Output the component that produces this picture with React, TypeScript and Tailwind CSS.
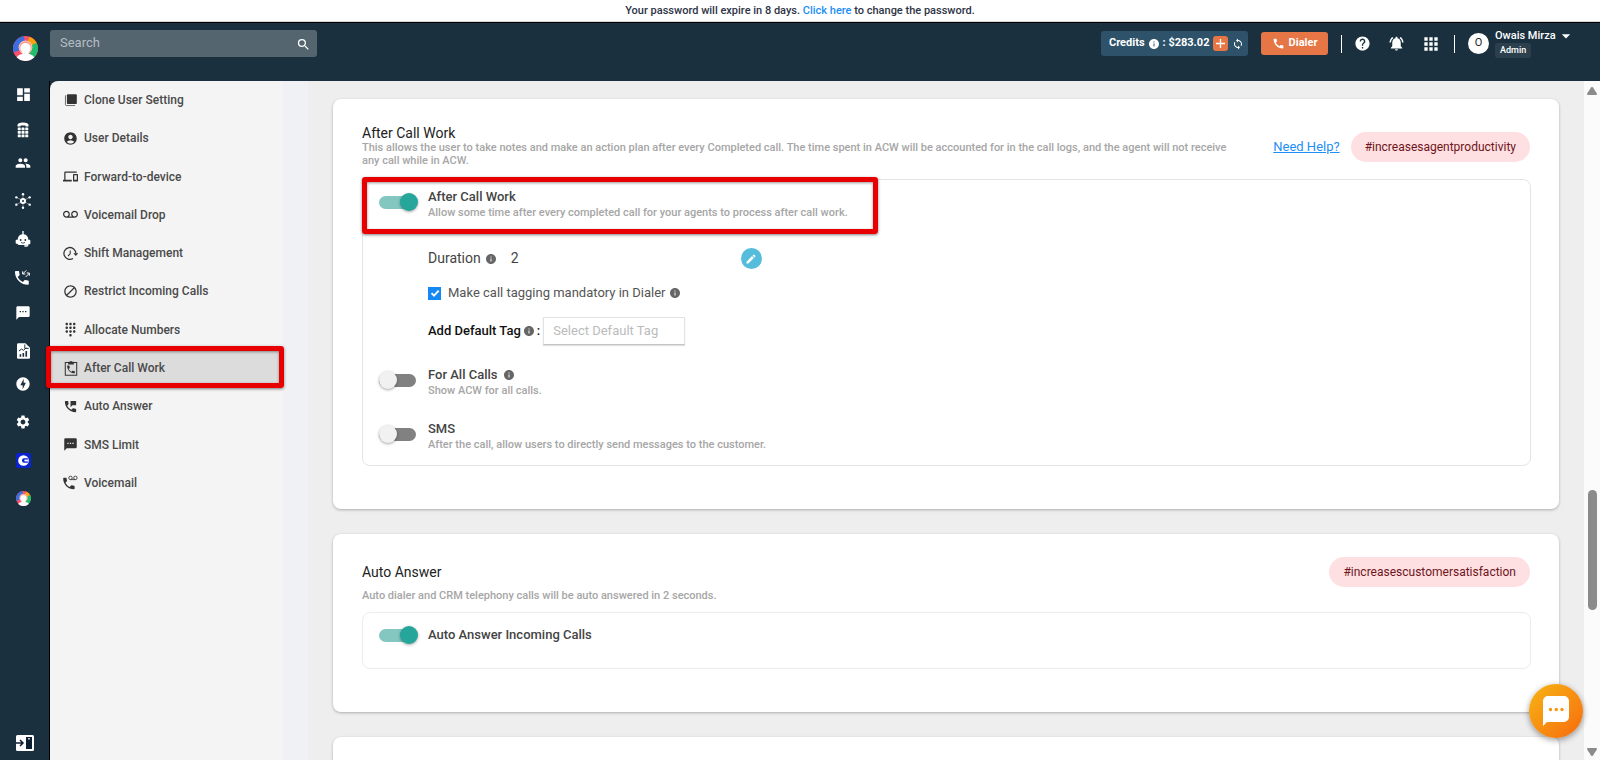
import type { ReactNode } from "react";
import { clsx } from "clsx";
import {
  MdAccountCircle,
  MdApps,
  MdArrowDropDown,
  MdBlock,
  MdCall,
  MdDashboard,
  MdDevices,
  MdDialpad,
  MdEdit,
  MdHelp,
  MdInfo,
  MdLoop,
  MdNotificationsActive,
  MdOfflineBolt,
  MdPeople,
  MdPermPhoneMsg,
  MdSearch,
  MdSettings,
  MdTextsms,
  MdVoicemail,
} from "react-icons/md";

const PHONE =
  "M6.62 10.79c1.44 2.83 3.76 5.14 6.59 6.59l2.2-2.2c.27-.27.67-.36 1.02-.24 1.12.37 2.33.57 3.57.57.55 0 1 .45 1 1V20c0 .55-.45 1-1 1-9.39 0-17-7.61-17-17 0-.55.45-1 1-1h3.5c.55 0 1 .45 1 1 0 1.25.2 2.45.57 3.57.11.35.03.74-.25 1.02l-2.2 2.2z";

type IconProps = { className?: string };

function BrandLogo({ className }: IconProps) {
  return (
    <svg viewBox="0 0 24 24" className={className} aria-hidden="true">
      <circle cx="12" cy="12" r="12" fill="#fb5068" />
      <path d="M12 12 .6 15.600A12 12 0 0 1 10.500 .1Z" fill="#3b6fe0" />
      <path d="M12 12 15.900 .7A12 12 0 0 1 23 7.400Z" fill="#fba20c" />
      <path d="M12 12 22.600 6.400A12 12 0 0 1 19.400 21.400Z" fill="#1fbf6b" />
      <circle cx="12" cy="11" r="6.600" fill="#ffc9bf" />
      <circle cx="12" cy="11" r="5.700" fill="#ff8f7a" />
      <circle cx="12" cy="11.500" r="5" fill="#fff" />
      <path d="M3.600 20.600C4.500 18.500 7.500 17 12 17s7.500 1.500 8.400 3.600A12 12 0 0 1 3.600 20.600Z" fill="#fff" />
      <path d="M9 14h6v4H9z" fill="#fff" />
    </svg>
  );
}

function DeskPhoneIcon({ className }: IconProps) {
  return (
    <svg viewBox="0 0 24 32" className={className} fill="currentColor" aria-hidden="true">
      <path d="M1 9V6c0-3 4-5 11-5s11 2 11 5v3h-6V7H7v2z" />
      {[11, 18, 25].map((y) =>
        [1.5, 9, 16.5].map((x) => <rect key={`${x}-${y}`} x={x} y={y} width="6" height="5.500" rx="1" />),
      )}
    </svg>
  );
}

function HubIcon({ className }: IconProps) {
  const spokes: [number, number][] = [
    [12, 1.8],
    [2, 6.5],
    [22, 6.5],
    [2, 17.5],
    [22, 17.5],
    [12, 22.2],
  ];
  return (
    <svg viewBox="0 0 24 24" className={className} fill="currentColor" aria-hidden="true">
      {spokes.map(([x, y]) => (
        <g key={`${x}-${y}`}>
          <path d={`M12 12 ${x} ${y}`} stroke="currentColor" strokeWidth="1" opacity=".6" />
          <circle cx={x} cy={y} r="1.800" />
        </g>
      ))}
      <circle cx="12" cy="12" r="4.600" />
      <circle cx="12" cy="12" r="1.500" fill="#1b303f" />
    </svg>
  );
}

function BotIcon({ className }: IconProps) {
  return (
    <svg viewBox="0 0 24 24" className={className} fill="currentColor" aria-hidden="true">
      <path d="M11 0h2v5c4.500.5 7 4 7 8h1.500c.8 0 1.500.6 1.500 1.500v4c0 .8-.7 1.500-1.500 1.500H20v1c0 1.500-1 2.500-2.500 2.500H14v-2h3.500l.5-.5H8c-2.500 0-4-1-4.500-2h-1C1.700 19 1 18.300 1 17.500v-3C1 13.600 1.700 13 2.500 13H4c0-4 2.500-7.500 7-8z" />
      <circle cx="8.500" cy="13.500" r="1.400" fill="#1b303f" />
      <circle cx="15.500" cy="13.500" r="1.400" fill="#1b303f" />
      <path d="M9 17c2 1.500 4 1.500 6 0" stroke="#1b303f" strokeWidth="1.200" fill="none" />
    </svg>
  );
}

function CallSwapIcon({ className }: IconProps) {
  return (
    <svg viewBox="0 0 24 24" className={className} fill="currentColor" aria-hidden="true">
      <path d={PHONE} transform="translate(-3.500 -.5) scale(1.150)" />
      <path d="M17 2l-5.500 5.500M11.500 3.500v4h4M16 12 21.500 6.500M17.500 6h4v4" fill="none" stroke="currentColor" strokeWidth="1.500" />
    </svg>
  );
}

function ReportIcon({ className }: IconProps) {
  return (
    <svg viewBox="0 0 20 24" className={className} fill="currentColor" aria-hidden="true">
      <path d="M2 0h11l7 7v15a2 2 0 0 1-2 2H2a2 2 0 0 1-2-2V2C0 .9.9 0 2 0z" />
      <path d="M12 2v6h6M3 12l4-3 3 2 4-4" stroke="#1b303f" strokeWidth="1.500" fill="none" />
      <path d="M4 17h2.500v4H4zM8.500 15H11v6H8.500zM13 12h2.500v9H13z" fill="#1b303f" />
    </svg>
  );
}

function BlueAppIcon({ className }: IconProps) {
  return (
    <svg viewBox="0 0 24 24" className={className} aria-hidden="true">
      <rect width="24" height="24" rx="3" fill="#0a22d0" />
      <circle cx="12" cy="12" r="8.500" fill="#fff" />
      <path d="M19 8.500h-6a3.500 3.500 0 1 0 0 7h6z" fill="#0a22d0" />
      <path d="M19 10.500h-5.500v3H19z" fill="#fff" />
    </svg>
  );
}

function PanelToggleIcon({ className }: IconProps) {
  return (
    <svg viewBox="0 0 18 16" className={className} aria-hidden="true">
      <rect width="18" height="16" rx="1.500" fill="#fff" />
      <path d="M0 8h6M4 5l3 3-3 3" fill="none" stroke="#0e1f33" strokeWidth="1.500" />
      <rect x="10" y="2" width="6" height="12" fill="#0e1f33" />
      <rect x="12.200" y="3" width="1.500" height="1.500" fill="#fff" />
    </svg>
  );
}

function CloneIcon({ className }: IconProps) {
  return (
    <svg viewBox="0 0 24 24" className={className} fill="currentColor" aria-hidden="true">
      <path d="M7 2h13c1 0 2 .9 2 2v13c0 1.100-.9 2-2 2H7c-1.100 0-2-.9-2-2V4c0-1.100.9-2 2-2z" />
      <path d="M2.500 4V20c0 .8.700 1.500 1.500 1.500h15" fill="none" stroke="currentColor" strokeWidth="1.500" opacity=".8" />
    </svg>
  );
}

function ShiftIcon({ className }: IconProps) {
  return (
    <svg viewBox="0 0 24 24" className={className} fill="none" stroke="currentColor" strokeWidth="2" aria-hidden="true">
      <path d="M20.500 12A9.500 9.500 0 1 0 16 20" />
      <path d="M11.500 7v5.500L8 16" strokeWidth="1.700" />
      <path d="M16.500 11.500h8L20.500 16z" fill="currentColor" stroke="none" />
    </svg>
  );
}

function ClipboardCallIcon({ className }: IconProps) {
  return (
    <svg viewBox="0 0 24 28" className={className} fill="currentColor" aria-hidden="true">
      <path d="M2 4.500h20v22H2z" fill="none" stroke="currentColor" strokeWidth="1.800" />
      <path d="M7 3h3a2.200 2.200 0 0 1 4 0h3v5H7z" />
      <path d={PHONE} transform="translate(3 7.500) scale(.75)" />
    </svg>
  );
}

function VoicemailCallIcon({ className }: IconProps) {
  return (
    <svg viewBox="0 0 26 24" className={className} fill="currentColor" aria-hidden="true">
      <path d={PHONE} transform="translate(-3 .5) scale(1.100)" />
      <g fill="none" stroke="currentColor" strokeWidth="1.500">
        <circle cx="13" cy="4" r="3" />
        <circle cx="21.500" cy="4" r="3" />
        <path d="M13 7h8.500" />
      </g>
    </svg>
  );
}

const railItems: { name: string; icon: ReactNode; gap: string }[] = [
  { name: "Dashboard", icon: <MdDashboard className="size-[17px]" />, gap: "mb-5" },
  { name: "Numbers", icon: <DeskPhoneIcon className="h-4 w-3" />, gap: "mb-[17px]" },
  { name: "Users", icon: <MdPeople className="size-4" />, gap: "mb-[22px]" },
  { name: "Integrations", icon: <HubIcon className="size-4" />, gap: "mb-[22px]" },
  { name: "Assistant", icon: <BotIcon className="size-4" />, gap: "mb-[22px]" },
  { name: "Call logs", icon: <CallSwapIcon className="size-4" />, gap: "mb-5" },
  { name: "Messages", icon: <MdTextsms className="size-4" />, gap: "mb-[22px]" },
  { name: "Reports", icon: <ReportIcon className="h-4 w-[13px]" />, gap: "mb-[17px]" },
  { name: "Automation", icon: <MdOfflineBolt className="size-4" />, gap: "mb-[22px]" },
  { name: "Settings", icon: <MdSettings className="size-4" />, gap: "mb-[22px]" },
  { name: "Partner app", icon: <BlueAppIcon className="size-[15px]" />, gap: "mb-[22px]" },
  { name: "Home", icon: <BrandLogo className="size-[15px]" />, gap: "mb-auto" },
];

const menuItems: { label: string; icon: ReactNode; active?: boolean }[] = [
  { label: "Clone User Setting", icon: <CloneIcon className="size-[14px]" /> },
  { label: "User Details", icon: <MdAccountCircle className="size-[15px]" /> },
  { label: "Forward-to-device", icon: <MdDevices className="size-[15px]" /> },
  { label: "Voicemail Drop", icon: <MdVoicemail className="size-[15px]" /> },
  { label: "Shift Management", icon: <ShiftIcon className="size-[15px]" /> },
  { label: "Restrict Incoming Calls", icon: <MdBlock className="size-[15px]" /> },
  { label: "Allocate Numbers", icon: <MdDialpad className="size-[15px]" /> },
  { label: "After Call Work", icon: <ClipboardCallIcon className="h-4 w-[14px]" />, active: true },
  { label: "Auto Answer", icon: <MdPermPhoneMsg className="size-[15px]" /> },
  { label: "SMS Limit", icon: <MdTextsms className="size-[15px]" /> },
  { label: "Voicemail", icon: <VoicemailCallIcon className="h-[15px] w-4" /> },
];

function Toggle({ id, on = false }: { id: string; on?: boolean }) {
  return (
    <span className="relative flex h-[18px] w-[39px] shrink-0 items-center">
      <input
        id={id}
        type="checkbox"
        role="switch"
        defaultChecked={on}
        className="peer absolute inset-0 z-10 m-0 cursor-pointer opacity-0"
      />
      <span className="h-[13px] w-[37px] rounded-full bg-[#818181] peer-checked:bg-[#84c7c1]" />
      <span className="absolute left-0 size-[18px] rounded-full bg-[#f1f1f1] shadow-[0_1px_3px_rgba(0,0,0,0.35)] peer-checked:left-[21px] peer-checked:bg-[#26a69a]" />
    </span>
  );
}

function SettingRow({
  id,
  label,
  hint,
  on,
  info,
}: {
  id: string;
  label: string;
  hint: string;
  on?: boolean;
  info?: boolean;
}) {
  return (
    <div className="flex items-start gap-[10px]">
      <span className="pt-1">
        <Toggle id={id} on={on} />
      </span>
      <div>
        <label htmlFor={id} className="flex items-center text-[13px] leading-4 font-medium text-[#444]">
          {label}
          {info && <Info className="ml-[5px]" />}
        </label>
        <p className="text-[11px] leading-4 font-medium text-[#a6a6a6]">{hint}</p>
      </div>
    </div>
  );
}

function Info({ className }: IconProps) {
  return <MdInfo className={clsx("size-3 shrink-0 text-[#666]", className)} aria-hidden="true" />;
}

function Highlight({ className }: IconProps) {
  return (
    <span
      aria-hidden="true"
      className={clsx(
        "pointer-events-none absolute z-10 rounded-[3px] border-5 border-[#e80000] shadow-[0_1px_3px_rgba(0,0,0,0.5),inset_0_1px_3px_rgba(0,0,0,0.4)]",
        className,
      )}
    />
  );
}

function Tag({ children }: { children: ReactNode }) {
  return (
    <span className="flex h-[30px] shrink-0 items-center rounded-full bg-[#ffe0e2] px-[14px] text-[12px] text-[#6e1420]">
      {children}
    </span>
  );
}

function Card({ children, className }: { children?: ReactNode; className?: string }) {
  return (
    <section
      className={clsx(
        "shrink-0 rounded-lg bg-white pr-7 pl-[29px] shadow-[0_1px_3px_rgba(0,0,0,0.28)]",
        className,
      )}
    >
      {children}
    </section>
  );
}

function Header() {
  return (
    <header className="flex h-[59px] shrink-0 items-start border-t border-black bg-[#1b303f] pr-[25px] text-white">
      <a href="#home" aria-label="Home" className="ml-[13px] mt-[13px] mr-3">
        <BrandLogo className="size-[25px]" />
      </a>
      <form className="relative mt-[7px] w-[267px]">
        <input
          type="search"
          aria-label="Search"
          placeholder="Search"
          className="block h-[27px] w-full rounded-[3px] bg-[#54656f] pr-8 pb-[3px] pl-[10px] text-[13px] text-white placeholder:text-[#b4bdc3]"
        />
        <button type="button" aria-label="Run search" className="absolute top-[7px] right-[6px]">
          <MdSearch className="size-[15px]" />
        </button>
      </form>
      <div className="mt-[7px] ml-auto flex h-[27px] items-center">
        <div className="flex h-[25px] w-[147px] items-center gap-[3px] rounded-[3px] bg-[#2d526a] pl-2 text-[11px] font-bold whitespace-nowrap">
          <span>Credits</span>
          <MdInfo className="size-3 shrink-0" />
          <span>: $283.02</span>
          <button
            type="button"
            aria-label="Add credits"
            className="ml-px flex size-[15px] shrink-0 items-center justify-center rounded-[3px] bg-[#e67645]"
          >
            <svg viewBox="0 0 10 10" className="size-[9px]" stroke="#fff" strokeWidth="1.500" aria-hidden="true">
              <path d="M5 0v10M0 5h10" />
            </svg>
          </button>
          <button type="button" aria-label="Refresh credits" className="ml-px">
            <MdLoop className="size-3" />
          </button>
        </div>
        <button
          type="button"
          className="ml-[13px] flex h-[23px] w-[67px] items-center justify-center gap-1 rounded-[3px] bg-[#e67645] text-[11px] font-bold"
        >
          <MdCall className="size-[13px]" />
          Dialer
        </button>
        <span className="ml-[13px] h-[18px] w-px bg-white" />
        <button type="button" aria-label="Help" className="ml-3">
          <MdHelp className="size-[17px]" />
        </button>
        <button type="button" aria-label="Notifications" className="ml-[17px]">
          <MdNotificationsActive className="size-[17px]" />
        </button>
        <button type="button" aria-label="Apps" className="ml-4">
          <MdApps className="size-5" />
        </button>
        <span className="ml-[13px] h-[18px] w-px bg-white" />
        <span className="ml-[13px] flex size-[21px] items-center justify-center rounded-full bg-white text-[11px] text-[#222]">
          O
        </span>
        <div className="ml-[6px] flex w-20 flex-col items-start">
          <button type="button" className="flex h-[14px] items-center text-[11px] font-medium whitespace-nowrap">
            Owais Mirza
            <MdArrowDropDown className="size-5" />
          </button>
          <span className="flex h-[15px] items-center rounded-[3px] bg-[#2b3f4c] px-[5px] text-[9px] font-medium">
            Admin
          </span>
        </div>
      </div>
    </header>
  );
}

function Rail() {
  return (
    <nav
      aria-label="Main"
      className="flex w-[50px] shrink-0 flex-col border-r border-black bg-[#1b303f] pt-[5px] pb-[9px] text-white"
    >
      {railItems.map((item) => (
        <a
          key={item.name}
          href="#section"
          aria-label={item.name}
          className={clsx("flex h-4 w-[46px] shrink-0 items-center justify-center", item.gap)}
        >
          {item.icon}
        </a>
      ))}
      <button type="button" aria-label="Expand menu" className="ml-4 w-[18px] shrink-0">
        <PanelToggleIcon className="block h-4 w-[18px]" />
      </button>
    </nav>
  );
}

function SideMenu() {
  return (
    <nav
      aria-label="User settings"
      className="w-[233px] shrink-0 rounded-tl-lg bg-[#f4f4f4] text-[12px] font-medium text-[#4a4a4a]"
    >
      <ul className="grid h-[421px] grid-rows-11">
        {menuItems.map((item) => (
          <li key={item.label} className="relative flex">
            <a
              href="#setting"
              className={clsx("flex w-full items-center gap-[6px] pl-[13px]", item.active && "bg-[#dcdcdc]")}
            >
              <span className="flex w-[15px] justify-center text-[#333]">{item.icon}</span>
              {item.label}
            </a>
            {item.active && <Highlight className="-top-[3px] -right-px -bottom-px -left-1" />}
          </li>
        ))}
      </ul>
    </nav>
  );
}

function AfterCallWork() {
  return (
    <Card className="pt-[26px] pb-[43px]">
      <div className="flex items-start">
        <div className="flex-1">
          <h2 className="text-[14px] leading-4 text-[#222]">After Call Work</h2>
          <p className="text-[11px] leading-[13px] font-medium text-[#a6a6a6]">
            This allows the user to take notes and make an action plan after every Completed call. The time spent in ACW
            will be accounted for in the call logs, and the agent will not receive
            <br />
            any call while in ACW.
          </p>
        </div>
        <div className="mt-[7px] flex items-center gap-[11px] pr-px">
          <a href="#help" className="text-[13px] text-[#1e8ff5] underline">
            Need Help?
          </a>
          <Tag>#increasesagentproductivity</Tag>
        </div>
      </div>

      <div className="relative mt-3 rounded-lg border border-[#e4e4e4] px-4 pt-[9px] pb-3">
        <Highlight className="-top-[3px] -left-px h-[57px] w-[516px]" />
        <SettingRow
          id="acw"
          on
          label="After Call Work"
          hint="Allow some time after every completed call for your agents to process after call work."
        />

        <div className="pl-[49px]">
          <div className="mt-[27px] flex h-[21px] items-center text-[14px] text-[#444]">
            <span>Duration</span>
            <Info className="ml-1" />
            <span className="ml-[14px]">2</span>
            <button
              type="button"
              aria-label="Edit duration"
              className="ml-[222px] flex size-[21px] items-center justify-center rounded-full bg-[#56bcdc] text-white"
            >
              <MdEdit className="size-3" />
            </button>
          </div>
          <div className="mt-4 flex h-4 items-center text-[13px] text-[#555]">
            <span className="relative flex size-[13px] items-center justify-center">
              <input
                id="mandatory"
                type="checkbox"
                defaultChecked
                className="peer absolute inset-0 appearance-none border border-[#999] checked:border-[#1488f5] checked:bg-[#1488f5]"
              />
              <svg
                viewBox="0 0 12 12"
                className="pointer-events-none relative hidden size-3 peer-checked:block"
                aria-hidden="true"
              >
                <path d="M2.500 6.200 5 8.700 9.700 3.600" fill="none" stroke="#fff" strokeWidth="1.900" />
              </svg>
            </span>
            <label htmlFor="mandatory" className="ml-[7px]">
              Make call tagging mandatory in Dialer
            </label>
            <Info className="ml-[3px]" />
          </div>
          <div className="mt-4 flex h-7 items-center text-[13px]">
            <label htmlFor="default-tag" className="flex items-center font-medium text-[#111]">
              Add Default Tag
              <Info className="mx-[2px]" />:
            </label>
            <input
              id="default-tag"
              type="text"
              placeholder="Select Default Tag"
              className="ml-[3px] h-7 w-[142px] border border-[#e2e2e2] border-b-[#c4c4c4] px-[9px] pb-px shadow-[0_1px_1px_rgba(0,0,0,0.12)] placeholder:text-[#bbb]"
            />
          </div>
        </div>

        <div className="mt-[22px] flex flex-col gap-[22px]">
          <SettingRow id="all-calls" label="For All Calls" hint="Show ACW for all calls." info />
          <SettingRow
            id="sms"
            label="SMS"
            hint="After the call, allow users to directly send messages to the customer."
          />
        </div>
      </div>
    </Card>
  );
}

function AutoAnswer() {
  return (
    <Card className="pt-[23px] pb-[43px]">
      <div className="flex items-center justify-between pr-px">
        <h2 className="text-[14px] leading-4 text-[#222]">Auto Answer</h2>
        <Tag>#increasescustomersatisfaction</Tag>
      </div>
      <p className="mt-px text-[11px] leading-4 font-medium text-[#a6a6a6]">
        Auto dialer and CRM telephony calls will be auto answered in 2 seconds.
      </p>
      <div className="mt-2 flex items-center gap-[10px] rounded-lg border border-[#ececec] px-4 pt-[13px] pb-6">
        <Toggle id="auto-answer" on />
        <label htmlFor="auto-answer" className="text-[13px] leading-4 font-medium text-[#444]">
          Auto Answer Incoming Calls
        </label>
      </div>
    </Card>
  );
}

function ScrollTrack() {
  return (
    <div aria-hidden="true" className="flex w-4 shrink-0 flex-col items-center bg-[#fbfbfb] pt-[6px] pb-1">
      <svg viewBox="0 0 10 8" className="h-2 w-[10px]" fill="#8b8b8b">
        <path d="M4 .6a1.200 1.200 0 0 1 2 0L9.800 6.500c.4.800 0 1.500-.8 1.500H1C.2 8-.2 7.300.2 6.500z" />
      </svg>
      <span className="mt-auto h-[120px] w-[9px] rounded-full bg-[#8b8b8b]" />
      <svg viewBox="0 0 10 8" className="mt-[138px] h-2 w-[10px]" fill="#8b8b8b">
        <path d="M4 7.400a1.200 1.200 0 0 0 2 0L9.800 1.500C10.200.7 9.800 0 9 0H1C.2 0-.2.7.2 1.500z" />
      </svg>
    </div>
  );
}

export default function App() {
  return (
    <div className="flex h-screen flex-col overflow-hidden bg-[#1b303f] font-['Roboto',sans-serif]">
      <p className="h-[22px] shrink-0 border-b border-[#d5d5d5] bg-white text-center text-[11px] leading-[21px] font-medium text-[#2d3446]">
        Your password will expire in 8 days.{" "}
        <a href="#password" className="text-[#1e8ff5]">
          Click here
        </a>{" "}
        to change the password.
      </p>
      <Header />
      <div className="flex min-h-0 flex-1">
        <Rail />
        <SideMenu />
        <div className="w-[25px] shrink-0 bg-[#eff1f5]" />
        <main className="flex flex-1 flex-col gap-[25px] overflow-y-auto bg-[#eee] pt-[18px] pr-[25px] pl-[25px] [scrollbar-width:none]">
          <AfterCallWork />
          <AutoAnswer />
          <Card className="h-32" />
        </main>
        <ScrollTrack />
      </div>
      <button
        type="button"
        aria-label="Open chat"
        className="fixed right-[17px] bottom-[22px] z-20 flex size-[54px] items-center justify-center rounded-full bg-linear-to-br from-[#f6b313] to-[#f56a0f] shadow-[0_2px_6px_rgba(0,0,0,0.4)]"
      >
        <svg viewBox="0 0 26 30" className="h-[30px] w-[26px]" aria-hidden="true">
          <path d="M5 0h16a5 5 0 0 1 5 5v16a5 5 0 0 1-5 5H4l-4 4V5a5 5 0 0 1 5-5z" fill="#fff" />
          <g fill="#f5970f">
            <circle cx="7.500" cy="13.500" r="1.700" />
            <circle cx="13.300" cy="13.500" r="1.700" />
            <circle cx="19" cy="13.500" r="1.700" />
          </g>
        </svg>
      </button>
    </div>
  );
}
